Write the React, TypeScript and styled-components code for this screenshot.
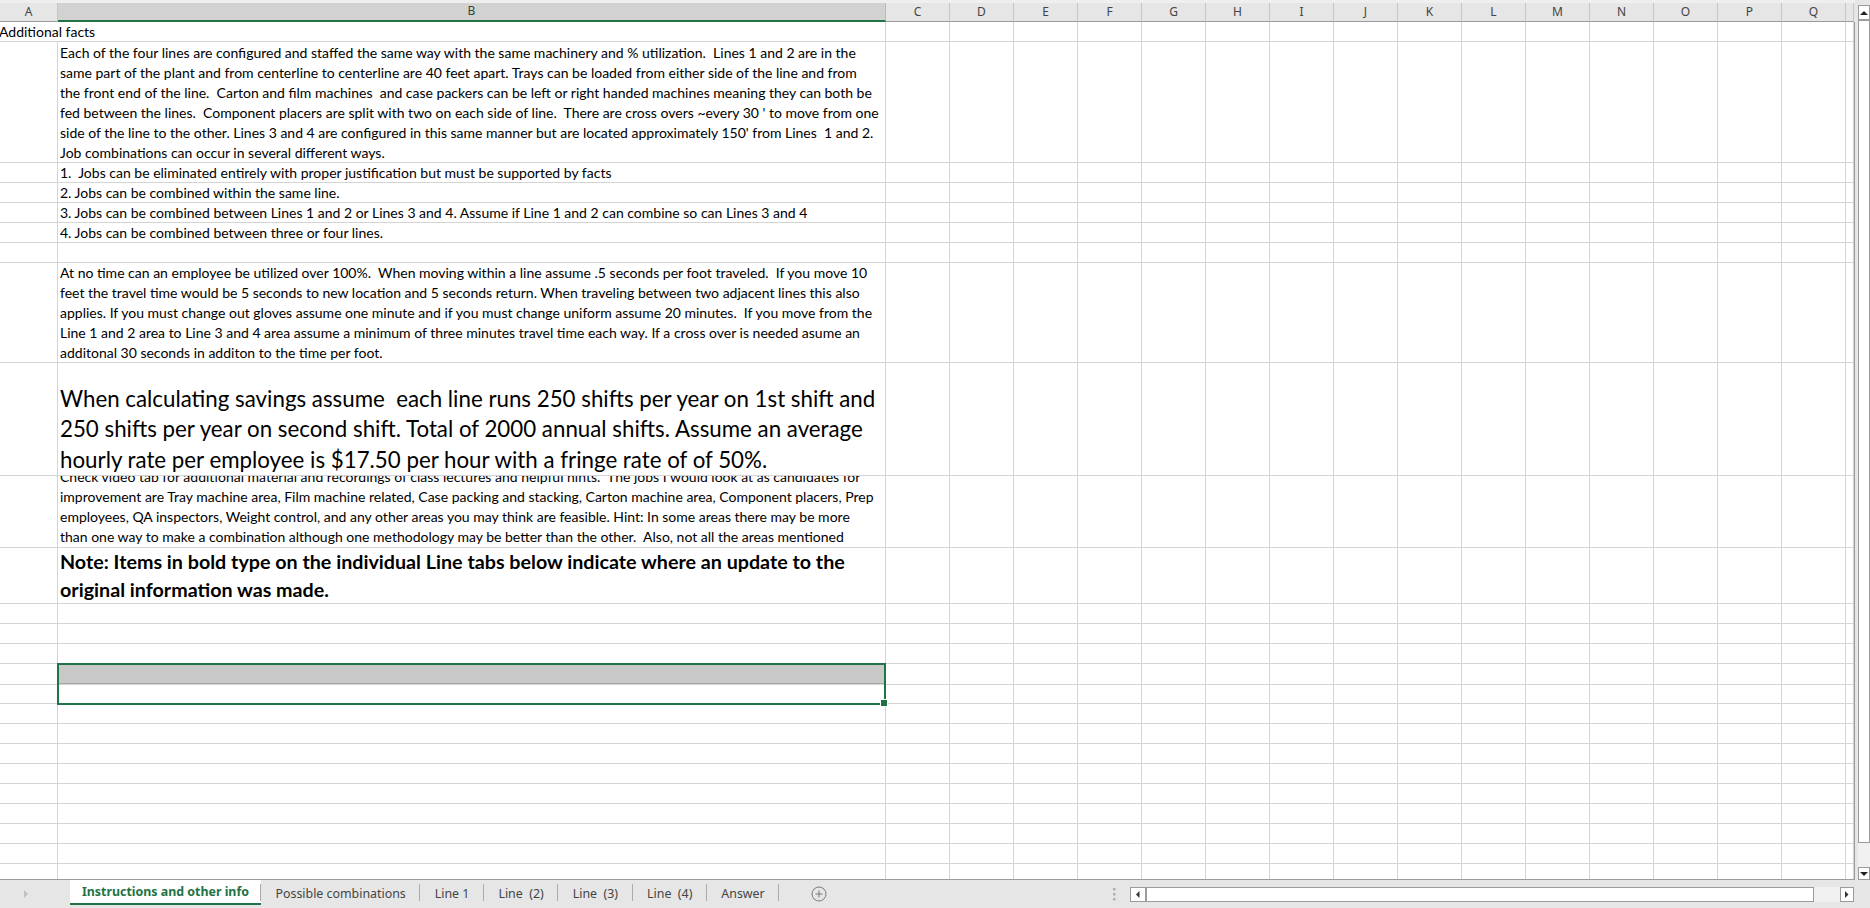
import React from 'react';
import styled, { createGlobalStyle } from 'styled-components';

const GlobalStyle = createGlobalStyle`
  html, body {
    margin: 0;
    padding: 0;
    background: #e6e6e6;
    overflow: hidden;
  }
`;

const COLUMNS = '58px 828px repeat(15, 64px) 8px';
const GRID = '#d4d4d4';
const GREEN = '#217346';
const EDGE = '#9b9b9b';
const LETTERS = ['C', 'D', 'E', 'F', 'G', 'H', 'I', 'J', 'K', 'L', 'M', 'N', 'O', 'P', 'Q'];

const Page = styled.div`
  width: 1870px;
  height: 908px;
  display: flex;
  flex-direction: column;
  background: #e6e6e6;
  overflow: hidden;
`;

const Main = styled.div`
  height: 880px;
  display: flex;
`;

const Sheet = styled.div`
  width: 1855px;
  height: 880px;
  display: flex;
  flex-direction: column;
  overflow: hidden;
`;

/** ******
 * column header
 */
const HeaderRow = styled.div`
  display: grid;
  grid-template-columns: ${COLUMNS};
  height: 22px;
  box-sizing: border-box;
  border-top: 3px solid #efefef;
  background: #e6e6e6;
`;

const HeaderCell = styled.div<{ $selected?: boolean }>`
  box-sizing: border-box;
  display: flex;
  align-items: center;
  justify-content: center;
  border-right: 1px solid ${(p) => (p.$selected ? '#b9b9b9' : '#c6c6c6')};
  border-bottom: ${(p) => (p.$selected ? `2px solid ${GREEN}` : `1px solid ${EDGE}`)};
  background: ${(p) => (p.$selected ? '#d2d2d2' : '#e6e6e6')};
  color: ${(p) => (p.$selected ? '#2b4b38' : '#444')};
  font-family: 'Noto Sans', 'Open Sans', sans-serif;
  font-size: 12px;
  line-height: 1;
  padding-bottom: 1px;
`;

/** ******
 * cells
 */
const Body = styled.div`
  flex: 1;
  background: #fff;
  border-right: 1px solid ${EDGE};
  border-bottom: 1px solid ${EDGE};
  overflow: hidden;
`;

const Row = styled.div<{ $h: number }>`
  display: grid;
  grid-template-columns: ${COLUMNS};
  height: ${(p) => p.$h}px;
`;

const Cell = styled.div<{ $span?: number }>`
  box-sizing: border-box;
  position: relative;
  grid-column: span ${(p) => p.$span ?? 1};
  border-right: 1px solid ${GRID};
  border-bottom: 1px solid ${GRID};
  min-width: 0;
`;

const TextCell = styled(Cell)<{ $align?: 'top' | 'bottom' }>`
  display: flex;
  flex-direction: column;
  justify-content: ${(p) => (p.$align === 'bottom' ? 'flex-end' : 'flex-start')};
  overflow: hidden;
  padding-left: 2px;
`;

const Lines = styled.div<{ $size: number; $lh: number; $bold?: boolean; $pad?: number }>`
  font-family: Lato, 'Liberation Sans', sans-serif;
  font-size: ${(p) => p.$size}px;
  line-height: ${(p) => p.$lh}px;
  font-weight: ${(p) => (p.$bold ? 700 : 400)};
  color: #000;
  white-space: pre;
  padding-top: ${(p) => p.$pad ?? 0}px;
  flex-shrink: 0;
`;

const Overflow = styled.div`
  position: absolute;
  left: -1px;
  top: 0;
  font-family: Lato, 'Liberation Sans', sans-serif;
  font-size: 14px;
  line-height: 20px;
  white-space: pre;
  color: #000;
`;

const Shaded = styled.div`
  height: 20px;
  box-sizing: border-box;
  background: #c8c8c8;
  border-bottom: 1px solid #a6a6a6;
`;

const Selection = styled.div`
  position: absolute;
  left: -1px;
  top: -1px;
  right: -1px;
  height: 42px;
  box-sizing: border-box;
  border: 2px solid ${GREEN};
  z-index: 2;
  pointer-events: none;
`;

const FillHandle = styled.span`
  position: absolute;
  right: -4px;
  bottom: -4px;
  width: 6px;
  height: 6px;
  background: ${GREEN};
  border: 1px solid #fff;
`;

/** ******
 * vertical scrollbar
 */
const VScroll = styled.div`
  width: 12px;
  margin-left: 3px;
  padding-top: 5px;
  display: flex;
  flex-direction: column;
`;

const ScrollButton = styled.div<{ $h?: number; $w?: number }>`
  box-sizing: border-box;
  height: ${(p) => (p.$h ? `${p.$h}px` : 'auto')};
  width: ${(p) => (p.$w ? `${p.$w}px` : 'auto')};
  background: #fff;
  border: 1px solid ${EDGE};
  display: flex;
  align-items: center;
  justify-content: center;
  flex-shrink: 0;
`;

const Thumb = styled.div`
  flex: 1;
  box-sizing: border-box;
  background: #fff;
  border: 1px solid ${EDGE};
`;

const Track = styled.div<{ $size: number; $vertical?: boolean }>`
  ${(p) => (p.$vertical ? `height: ${p.$size}px;` : `width: ${p.$size}px;`)}
  background: #f0f0f0;
  flex-shrink: 0;
`;

/** ******
 * sheet tabs
 */
const TabBar = styled.div`
  height: 28px;
  display: flex;
  align-items: stretch;
  font-family: 'Noto Sans', 'Open Sans', sans-serif;
  font-size: 12.4px;
  color: #444;
`;

const NavArea = styled.div`
  width: 70px;
  display: flex;
  align-items: center;
  padding-left: 24px;
  box-sizing: border-box;
`;

const Tab = styled.div<{ $active?: boolean }>`
  display: flex;
  align-items: center;
  white-space: pre;
  padding: 0 ${(p) => (p.$active ? 12 : 14.5)}px;
  height: ${(p) => (p.$active ? 23 : 26)}px;
  background: ${(p) => (p.$active ? '#fff' : 'transparent')};
  color: ${(p) => (p.$active ? GREEN : '#444')};
  font-weight: ${(p) => (p.$active ? 700 : 400)};
  border-bottom: ${(p) => (p.$active ? `2px solid ${GREEN}` : 'none')};
  position: relative;

  &:not(:first-child)::after {
    content: '';
    position: absolute;
    right: 0;
    top: 4px;
    height: 17px;
    border-right: 1px solid #ababab;
  }
`;

const AddButton = styled.div`
  display: flex;
  align-items: center;
  margin-left: 32px;
`;

const Spacer = styled.div`
  flex: 1;
`;

const Splitter = styled.div`
  display: flex;
  align-items: center;
  margin-right: 14px;
`;

const HScroll = styled.div`
  width: 724px;
  margin-right: 16px;
  padding-top: 7px;
  height: 22px;
  box-sizing: border-box;
  display: flex;
  align-items: stretch;
  > * {
    height: 15px;
  }
`;

type Content = {
  lines: string[];
  size?: number;
  lh?: number;
  bold?: boolean;
  align?: 'top' | 'bottom';
  pad?: number;
};

type RowSpec = { h: number; b?: Content; title?: string; selected?: boolean };

const rows: RowSpec[] = [
  { h: 20, title: 'Additional facts' },
  {
    h: 121,
    b: {
      pad: 1,
      lines: [
        'Each of the four lines are configured and staffed the same way with the same machinery and % utilization.  Lines 1 and 2 are in the',
        'same part of the plant and from centerline to centerline are 40 feet apart. Trays can be loaded from either side of the line and from',
        'the front end of the line.  Carton and film machines  and case packers can be left or right handed machines meaning they can both be',
        "fed between the lines.  Component placers are split with two on each side of line.  There are cross overs ~every 30 ' to move from one",
        "side of the line to the other. Lines 3 and 4 are configured in this same manner but are located approximately 150' from Lines  1 and 2.",
        'Job combinations can occur in several different ways.',
      ],
    },
  },
  { h: 20, b: { lines: ['1.  Jobs can be eliminated entirely with proper justification but must be supported by facts'] } },
  { h: 20, b: { lines: ['2. Jobs can be combined within the same line.'] } },
  {
    h: 20,
    b: { lines: ['3. Jobs can be combined between Lines 1 and 2 or Lines 3 and 4. Assume if Line 1 and 2 can combine so can Lines 3 and 4'] },
  },
  { h: 20, b: { lines: ['4. Jobs can be combined between three or four lines.'] } },
  { h: 20 },
  {
    h: 100,
    b: {
      lines: [
        'At no time can an employee be utilized over 100%.  When moving within a line assume .5 seconds per foot traveled.  If you move 10',
        'feet the travel time would be 5 seconds to new location and 5 seconds return. When traveling between two adjacent lines this also',
        'applies. If you must change out gloves assume one minute and if you must change uniform assume 20 minutes.  If you move from the',
        'Line 1 and 2 area to Line 3 and 4 area assume a minimum of three minutes travel time each way. If a cross over is needed asume an',
        'additonal 30 seconds in additon to the time per foot.',
      ],
    },
  },
  {
    h: 113,
    b: {
      size: 22.3,
      lh: 30.5,
      align: 'bottom',
      lines: [
        'When calculating savings assume  each line runs 250 shifts per year on 1st shift and',
        '250 shifts per year on second shift. Total of 2000 annual shifts. Assume an average',
        'hourly rate per employee is $17.50 per hour with a fringe rate of of 50%.',
      ],
    },
  },
  {
    h: 72,
    b: {
      align: 'bottom',
      lines: [
        'Check video tab for additional material and recordings of class lectures and helpful hints.  The jobs I would look at as candidates for',
        'improvement are Tray machine area, Film machine related, Case packing and stacking, Carton machine area, Component placers, Prep',
        'employees, QA inspectors, Weight control, and any other areas you may think are feasible. Hint: In some areas there may be more',
        'than one way to make a combination although one methodology may be better than the other.  Also, not all the areas mentioned',
      ],
    },
  },
  {
    h: 56,
    b: {
      size: 19.7,
      lh: 28,
      bold: true,
      lines: ['Note: Items in bold type on the individual Line tabs below indicate where an update to the', 'original information was made.'],
    },
  },
  { h: 20 },
  { h: 20 },
  { h: 20 },
  { h: 20, selected: true },
  ...Array.from({ length: 10 }, () => ({ h: 20 })),
];

const tabs = ['Instructions and other info', 'Possible combinations', 'Line 1', 'Line  (2)', 'Line  (3)', 'Line  (4)', 'Answer'];

const Tri: React.FC<{ dir: 'up' | 'down' | 'left' | 'right'; color?: string; size?: number }> = ({ dir, color = '#222', size = 4 }) => {
  const s = size;
  const pts = {
    up: `0,${s} ${s},0 ${s * 2},${s}`,
    down: `0,0 ${s * 2},0 ${s},${s}`,
    left: `${s},0 ${s},${s * 2} 0,${s}`,
    right: `0,0 0,${s * 2} ${s},${s}`,
  }[dir];
  const vertical = dir === 'up' || dir === 'down';
  return (
    <svg width={vertical ? s * 2 : s} height={vertical ? s : s * 2} style={{ display: 'block' }}>
      <polygon points={pts} fill={color} />
    </svg>
  );
};

const EmptyCells: React.FC = () => (
  <>
    {LETTERS.map((l) => (
      <Cell key={l} />
    ))}
    <Cell />
  </>
);

const SheetRow: React.FC<{ spec: RowSpec }> = ({ spec }) => {
  if (spec.title) {
    return (
      <Row $h={spec.h}>
        <Cell $span={2}>
          <Overflow>{spec.title}</Overflow>
        </Cell>
        <EmptyCells />
      </Row>
    );
  }
  const b = spec.b;
  return (
    <Row $h={spec.h}>
      <Cell />
      {b ? (
        <TextCell $align={b.align}>
          <Lines $size={b.size ?? 14} $lh={b.lh ?? 20} $bold={b.bold} $pad={b.pad}>
            {b.lines.join('\n')}
          </Lines>
        </TextCell>
      ) : spec.selected ? (
        <Cell>
          <Shaded />
          <Selection>
            <FillHandle />
          </Selection>
        </Cell>
      ) : (
        <Cell />
      )}
      <EmptyCells />
    </Row>
  );
};

export default function App() {
  return (
    <Page>
      <GlobalStyle />
      <Main>
        <Sheet>
          <HeaderRow>
            <HeaderCell>A</HeaderCell>
            <HeaderCell $selected>B</HeaderCell>
            {LETTERS.map((l) => (
              <HeaderCell key={l}>{l}</HeaderCell>
            ))}
            <HeaderCell />
          </HeaderRow>
          <Body>
            {rows.map((r, i) => (
              <SheetRow key={i} spec={r} />
            ))}
          </Body>
        </Sheet>
        <VScroll>
          <ScrollButton $h={15}>
            <Tri dir="up" />
          </ScrollButton>
          <Thumb />
          <Track $size={24} $vertical />
          <ScrollButton $h={13}>
            <Tri dir="down" />
          </ScrollButton>
        </VScroll>
      </Main>
      <TabBar>
        <NavArea>
          <Tri dir="right" color="#c2c2c2" size={4} />
        </NavArea>
        {tabs.map((t, i) => (
          <Tab key={t} $active={i === 0}>
            {t}
          </Tab>
        ))}
        <AddButton>
          <svg width="16" height="16" viewBox="0 0 16 16">
            <circle cx="8" cy="8" r="7" fill="none" stroke="#7a7a7a" strokeWidth="1" />
            <path d="M8 4.5v7M4.5 8h7" stroke="#7a7a7a" strokeWidth="1" />
          </svg>
        </AddButton>
        <Spacer />
        <Splitter>
          <svg width="3" height="13">
            <rect x="0" y="0" width="2.5" height="2.5" fill="#b0b0b0" />
            <rect x="0" y="5" width="2.5" height="2.5" fill="#b0b0b0" />
            <rect x="0" y="10" width="2.5" height="2.5" fill="#b0b0b0" />
          </svg>
        </Splitter>
        <HScroll>
          <ScrollButton $w={16}>
            <Tri dir="left" color="#333" size={3.5} />
          </ScrollButton>
          <Thumb />
          <Track $size={26} />
          <ScrollButton $w={14}>
            <Tri dir="right" color="#333" size={3.5} />
          </ScrollButton>
        </HScroll>
      </TabBar>
    </Page>
  );
}
